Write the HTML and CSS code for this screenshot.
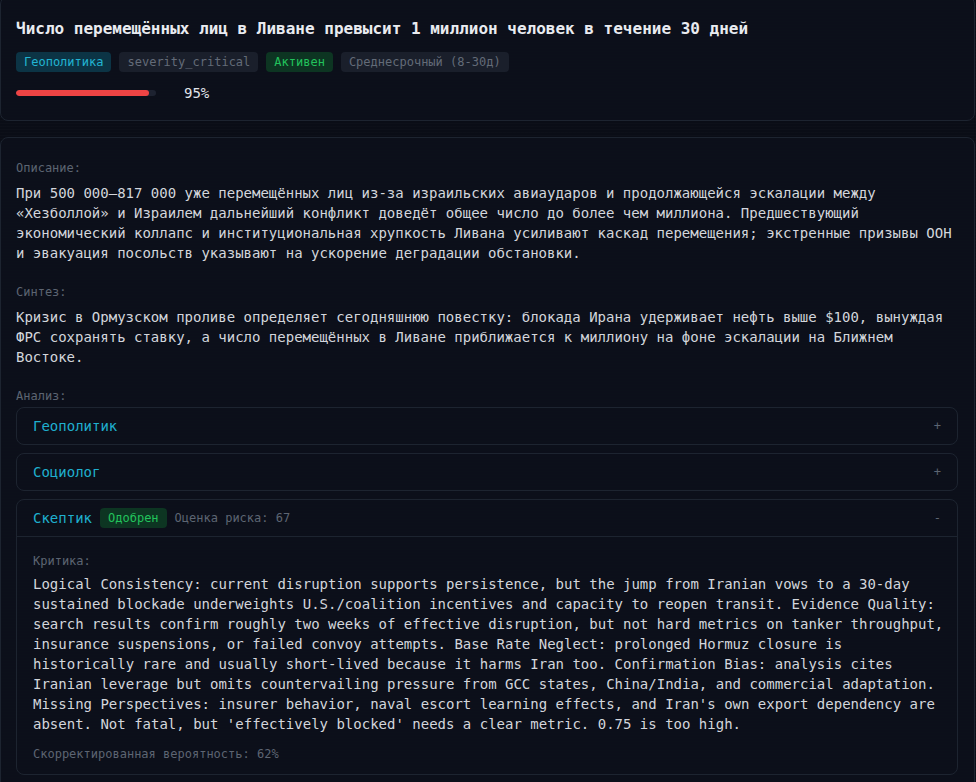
FILE: index.html
```html
<!DOCTYPE html>
<html lang="ru">
<head>
    <meta charset="UTF-8">
    <meta name="viewport" content="width=device-width, initial-scale=1.0">
    <title>Прогноз</title>
    <link rel="stylesheet" href="styles.css">
</head>
<body>
    <div class="page">
        <div class="card header-card">
            <h1 class="title">Число перемещённых лиц в Ливане превысит 1 миллион человек в течение 30 дней</h1>
            <div class="tags">
                <span class="tag tag-cyan">Геополитика</span>
                <span class="tag tag-gray">severity_critical</span>
                <span class="tag tag-green">Активен</span>
                <span class="tag tag-gray">Среднесрочный (8-30д)</span>
            </div>
            <div class="progress-row">
                <div class="progress">
                    <div class="progress-fill" style="width: 95%"></div>
                </div>
                <span class="progress-value">95%</span>
            </div>
        </div>

        <div class="card detail-card">
            <div class="section">
                <div class="label">Описание:</div>
                <p class="text">При 500 000–817 000 уже перемещённых лиц из-за израильских авиаударов и продолжающейся эскалации между «Хезболлой» и Израилем дальнейший конфликт доведёт общее число до более чем миллиона. Предшествующий экономический коллапс и институциональная хрупкость Ливана усиливают каскад перемещения; экстренные призывы ООН и эвакуация посольств указывают на ускорение деградации обстановки.</p>
            </div>

            <div class="section">
                <div class="label">Синтез:</div>
                <p class="text">Кризис в Ормузском проливе определяет сегодняшнюю повестку: блокада Ирана удерживает нефть выше $100, вынуждая ФРС сохранять ставку, а число перемещённых в Ливане приближается к миллиону на фоне эскалации на Ближнем Востоке.</p>
            </div>

            <div class="section">
                <div class="label label-tight">Анализ:</div>
                <div class="accordion">
                    <div class="acc-item">
                        <div class="acc-head">
                            <span class="acc-name">Геополитик</span>
                            <span class="acc-toggle">+</span>
                        </div>
                    </div>
                    <div class="acc-item">
                        <div class="acc-head">
                            <span class="acc-name">Социолог</span>
                            <span class="acc-toggle">+</span>
                        </div>
                    </div>
                    <div class="acc-item open">
                        <div class="acc-head">
                            <span class="acc-name">Скептик</span>
                            <span class="tag tag-green">Одобрен</span>
                            <span class="acc-meta">Оценка риска: 67</span>
                            <span class="acc-toggle">-</span>
                        </div>
                        <div class="acc-body">
                            <div class="label">Критика:</div>
                            <p class="text">Logical Consistency: current disruption supports persistence, but the jump from Iranian vows to a 30-day sustained blockade underweights U.S./coalition incentives and capacity to reopen transit. Evidence Quality: search results confirm roughly two weeks of effective disruption, but not hard metrics on tanker throughput, insurance suspensions, or failed convoy attempts. Base Rate Neglect: prolonged Hormuz closure is historically rare and usually short-lived because it harms Iran too. Confirmation Bias: analysis cites Iranian leverage but omits countervailing pressure from GCC states, China/India, and commercial adaptation. Missing Perspectives: insurer behavior, naval escort learning effects, and Iran's own export dependency are absent. Not fatal, but 'effectively blocked' needs a clear metric. 0.75 is too high.</p>
                            <div class="label adjusted">Скорректированная вероятность: 62%</div>
                        </div>
                    </div>
                </div>
            </div>
        </div>
    </div>
</body>
</html>
```

FILE: styles.css
```css
body {
    margin: 0;
    background-color: #0a0d16;
    background-image: repeating-linear-gradient(to bottom, rgba(255, 255, 255, 0.012) 0, rgba(255, 255, 255, 0.012) 1px, transparent 1px, transparent 3px);
    font-family: "DejaVu Sans Mono", "Liberation Mono", monospace;
    color: #d4d7de;
    overflow: hidden;
}
.page {
    width: 975px;
}
.card {
    background-color: rgba(13, 17, 27, 0.85);
    border: 1px solid #1d2430;
    border-radius: 8px;
}
.header-card {
    margin-top: -4px;
    padding: 20px 16px 18px 15px;
}
.title {
    margin: 0 0 11px;
    font-size: 16px;
    line-height: 24px;
    font-weight: bold;
    color: #e9ebf0;
}
.tags {
    display: flex;
    gap: 8px;
    margin-bottom: 12px;
}
.tag {
    display: inline-block;
    padding: 0 8px;
    height: 20px;
    line-height: 20px;
    font-size: 12px;
    border-radius: 4px;
}
.tag-cyan {
    background-color: #0c3445;
    color: #22b4d3;
}
.tag-gray {
    background-color: #1a1f2b;
    color: #636b78;
}
.tag-green {
    background-color: #0d3522;
    color: #22c35c;
}
.progress-row {
    display: flex;
    align-items: center;
    height: 18px;
}
.progress {
    width: 140px;
    height: 6px;
    border-radius: 3px;
    background-color: #1d2230;
    overflow: hidden;
}
.progress-fill {
    height: 100%;
    background-color: #ee4444;
    border-radius: 3px;
}
.progress-value {
    margin-left: 28px;
    font-size: 14px;
    color: #e2e5ea;
}

.detail-card {
    margin-top: 16px;
    padding: 22px 16px 16px 15px;
    min-height: 700px;
}
.section {
    margin-bottom: 21px;
}
.label {
    font-size: 12px;
    line-height: 16px;
    color: #5d6572;
    margin-bottom: 7px;
}
.label-tight {
    margin-bottom: 3px;
}
.text {
    margin: 0;
    font-size: 14px;
    line-height: 20px;
    color: #d3d6dc;
}
.accordion {
    display: flex;
    flex-direction: column;
    gap: 8px;
}
.acc-item {
    border: 1px solid #1d2430;
    border-radius: 8px;
}
.acc-head {
    display: flex;
    align-items: center;
    gap: 8px;
    height: 36px;
    padding: 0 16px;
}
.acc-name {
    font-size: 14px;
    color: #1fb0cf;
}
.acc-meta {
    font-size: 12px;
    color: #5d6572;
}
.acc-toggle {
    margin-left: auto;
    font-size: 12px;
    color: #5d6572;
}
.open .acc-head {
    border-bottom: 1px solid #1d2430;
}
.acc-body {
    padding: 16px 10px 12px 16px;
}
.acc-body .label {
    margin-bottom: 5px;
}
.acc-body .label.adjusted {
    margin: 12px 0 0;
}
```
